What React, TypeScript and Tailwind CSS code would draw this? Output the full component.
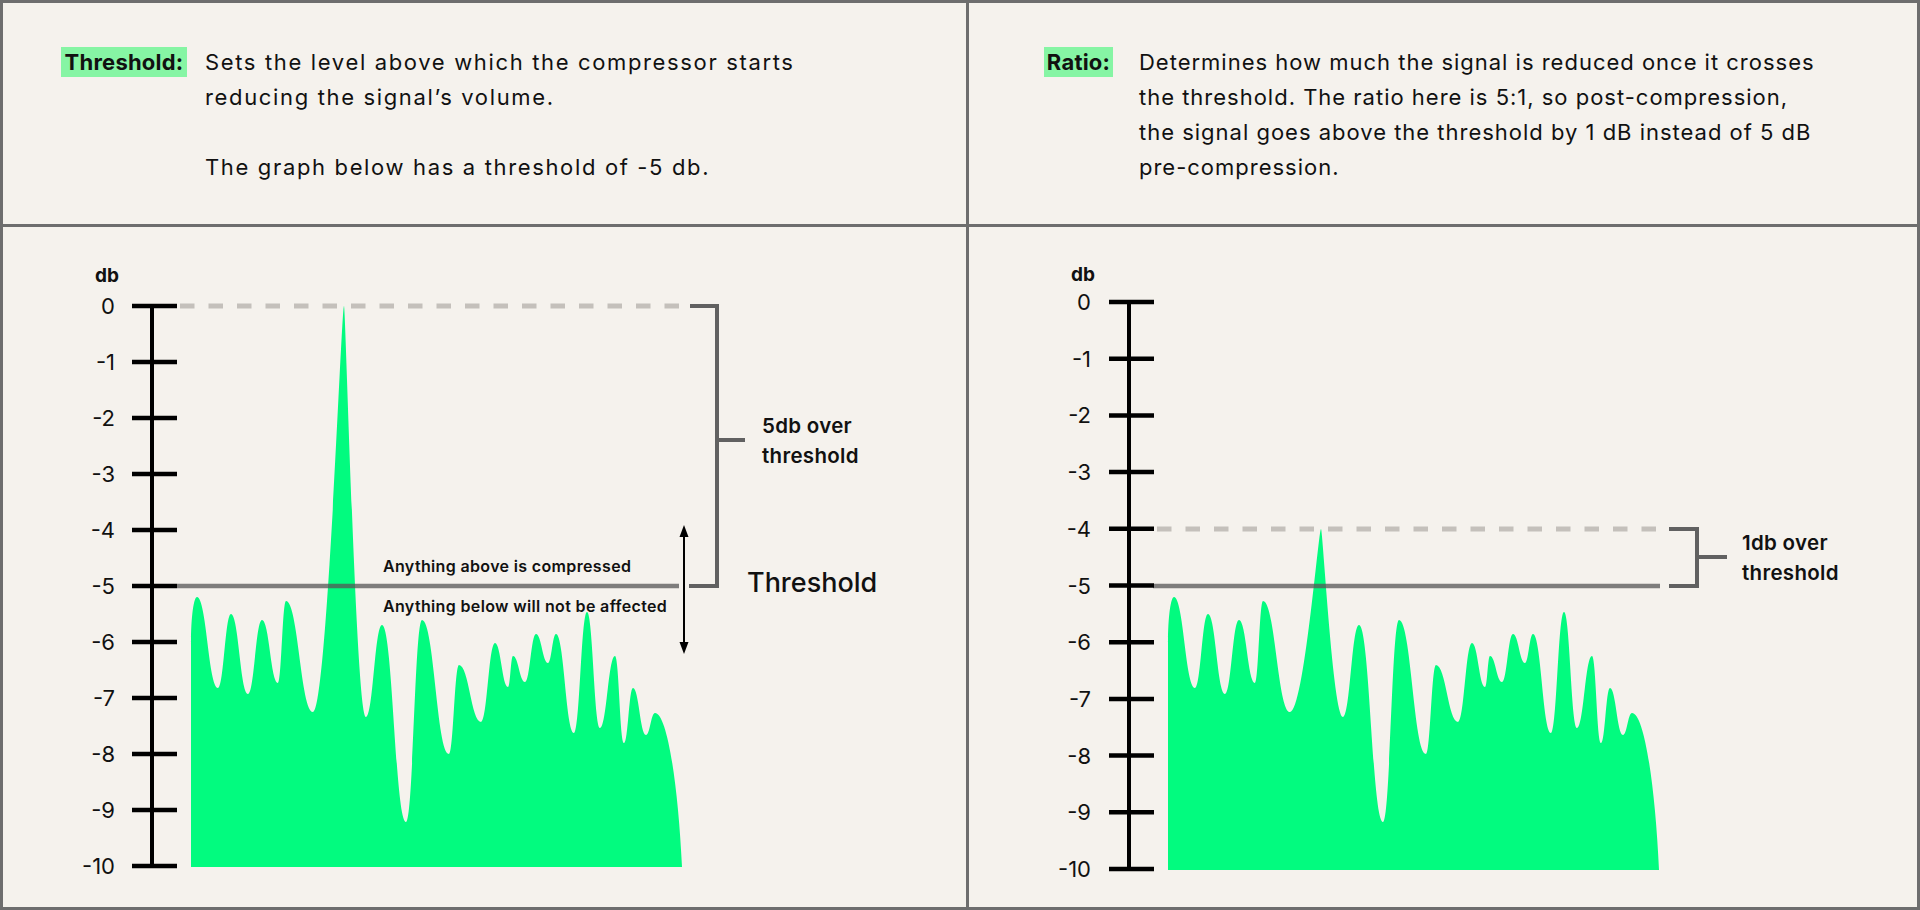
import React from "react";

const BASE: [number, number][] = [
  [197, 597], [218, 688], [231, 614], [248, 694], [262, 620], [278, 683], [286, 601],
  [313, 712], [344, 306], [366, 717], [382, 625], [406, 822], [422, 620], [449, 754],
  [459, 665], [481, 722], [495, 643], [508, 687], [513, 656], [525, 682], [536, 634],
  [548, 663], [556, 634], [574, 733], [587, 612], [600, 728], [615, 656], [624, 743],
  [633, 688], [646, 735], [655, 713],
];
const BIG = 8;

function wavePath(dx: number, bottom: number, bigY: number) {
  const P = BASE.map(([x, y], i) => [x + dx, i === BIG ? bigY : y]);
  const x0 = 191 + dx;
  let d = `M${x0},${bottom} L${x0},645 C${x0},615 ${P[0][0] - 3},${P[0][1]} ${P[0][0]},${P[0][1]}`;
  for (let i = 1; i < P.length; i++) {
    const [ax, ay] = P[i - 1];
    const [bx, by] = P[i];
    const w = bx - ax;
    const h0 = i - 1 === BIG ? 0.08 : 0.45;
    const h1 = i === BIG ? 0.08 : 0.45;
    d += ` C${ax + w * h0},${ay} ${bx - w * h1},${by} ${bx},${by}`;
  }
  const [lx, ly] = P[P.length - 1];
  const ex = 682 + dx;
  d += ` C${lx + 12},${ly} ${ex - 4},${ly + 70} ${ex},${bottom} Z`;
  return d;
}

function Axis({ y0, step, axisX, labelX }: { y0: number; step: number; axisX: number; labelX: number }) {
  const ks = [0, 1, 2, 3, 4, 5, 6, 7, 8, 9, 10];
  return (
    <g>
      <line x1={axisX} y1={y0} x2={axisX} y2={y0 + step * 10} stroke="#000" strokeWidth={4} />
      {ks.map((k) => {
        const y = y0 + step * k;
        return (
          <g key={k}>
            <line x1={axisX - 20} y1={y} x2={axisX + 25} y2={y} stroke="#000" strokeWidth={4.5} />
            <text x={labelX} y={y + 8} textAnchor="end" fontSize={22} fill="#111">
              {k === 0 ? "0" : `-${k}`}
            </text>
          </g>
        );
      })}
    </g>
  );
}

function LeftChart() {
  return (
    <svg width={963} height={680} className="block">
      <g transform="translate(-3,-227)">
        <text x={95} y={282} fontSize={19} fontWeight={700} fill="#111">db</text>
        <path d={wavePath(0, 867, 306)} fill="#02fb7f" />
        <line x1={180} y1={306} x2={683} y2={306} stroke="#c4c0bb" strokeWidth={5} strokeDasharray="14.5 14" />
        <line x1={177} y1={586} x2={679} y2={586} stroke="#555" strokeOpacity={0.75} strokeWidth={4.5} />
        <Axis y0={306} step={56} axisX={152} labelX={115} />
        <path d="M690,306 H717 V586 H689" fill="none" stroke="#616161" strokeWidth={4} />
        <line x1={717} y1={440} x2={745} y2={440} stroke="#616161" strokeWidth={4} />
        <line x1={684} y1={533} x2={684} y2={646} stroke="#000" strokeWidth={2} />
        <polygon points="684,525 679.5,537 688.5,537" fill="#000" />
        <polygon points="684,654 679.5,642 688.5,642" fill="#000" />
        <text x={383} y={572} fontSize={16} fontWeight={600} letterSpacing={0.35} fill="#111">Anything above is compressed</text>
        <text x={383} y={612} fontSize={16} fontWeight={600} letterSpacing={0.35} fill="#111">Anything below will not be affected</text>
        <text x={762} y={433} fontSize={20.5} fontWeight={600} letterSpacing={0.3} fill="#111">5db over</text>
        <text x={762} y={463} fontSize={20.5} fontWeight={600} letterSpacing={0.3} fill="#111">threshold</text>
        <text x={747} y={592} fontSize={27} fontWeight={500} fill="#111">Threshold</text>
      </g>
    </svg>
  );
}

function RightChart() {
  const dx = 977;
  return (
    <svg width={948} height={680} className="block">
      <g transform="translate(-969,-227)">
        <text x={1071} y={281} fontSize={19} fontWeight={700} fill="#111">db</text>
        <path d={wavePath(dx, 870, 529)} fill="#02fb7f" />
        <line x1={1157} y1={529} x2={1661} y2={529} stroke="#c4c0bb" strokeWidth={5} strokeDasharray="14.5 14" />
        <line x1={1153} y1={586} x2={1660} y2={586} stroke="#555" strokeOpacity={0.75} strokeWidth={4.5} />
        <Axis y0={302} step={56.7} axisX={1129} labelX={1091} />
        <path d="M1669,529 H1697 V586 H1669" fill="none" stroke="#616161" strokeWidth={4} />
        <line x1={1697} y1={557} x2={1727} y2={557} stroke="#616161" strokeWidth={4} />
        <text x={1742} y={550} fontSize={20.5} fontWeight={600} letterSpacing={0.3} fill="#111">1db over</text>
        <text x={1742} y={580} fontSize={20.5} fontWeight={600} letterSpacing={0.3} fill="#111">threshold</text>
      </g>
    </svg>
  );
}

export default function App() {
  return (
    <div className="w-[1920px] h-[910px] bg-[#6e6e6e] p-[3px] grid grid-cols-[963px_948px] grid-rows-[221px_680px] gap-[3px] font-['Inter',sans-serif] text-[#111]">
      <div className="bg-[#f5f2ed] pl-[58px] pt-[42px] flex items-start">
        <span className="mt-[2px] shrink-0 w-[126px] h-[30px] bg-[#86f5a4] text-center text-[22px] leading-[30px] font-bold tracking-[0.01em]">
          Threshold:
        </span>
        <p className="ml-[18px] text-[22px] leading-[35px] tracking-[0.075em] whitespace-nowrap">
          Sets the level above which the compressor starts
          <br />
          reducing the signal’s volume.
          <br />
          <br />
          The graph below has a threshold of -5 db.
        </p>
      </div>
      <div className="bg-[#f5f2ed] pl-[75px] pt-[42px] flex items-start">
        <span className="mt-[2px] shrink-0 w-[69px] h-[30px] bg-[#86f5a4] text-center text-[22px] leading-[30px] font-bold tracking-[0.01em]">
          Ratio:
        </span>
        <p className="ml-[26px] text-[22px] leading-[35px] tracking-[0.045em] whitespace-nowrap">
          Determines how much the signal is reduced once it crosses
          <br />
          the threshold. The ratio here is 5:1, so post-compression,
          <br />
          the signal goes above the threshold by 1 dB instead of 5 dB
          <br />
          pre-compression.
        </p>
      </div>
      <div className="bg-[#f5f2ed] overflow-hidden">
        <LeftChart />
      </div>
      <div className="bg-[#f5f2ed] overflow-hidden">
        <RightChart />
      </div>
    </div>
  );
}
